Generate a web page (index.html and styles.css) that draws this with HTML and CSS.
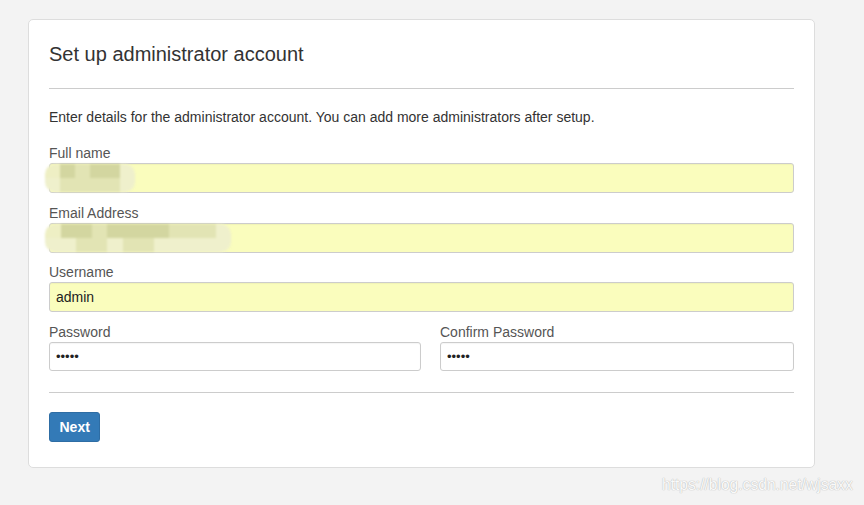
FILE: index.html
```html
<!DOCTYPE html>
<html>
  <head>
    <meta name="viewport" content="width=device-width, initial-scale=1" />
    <title>Set up administrator account</title>
    <link rel="stylesheet" href="styles.css">
  </head>
  <body>
    <div class="panel">
      <h2 class="panel-title">Set up administrator account</h2>
      <hr>
      <p class="intro">Enter details for the administrator account. You can add more administrators after setup.</p>
      <div class="field">
        <label>Full name</label>
        <div class="input-wrap">
          <input class="autofill" type="text" value="">
          <span class="mosaic mosaic-name">
            <i></i><i class="d"></i><i class="m"></i><i class="d"></i><i class="d"></i><i class="l"></i>
            <i class="l"></i><i class="m"></i><i class="m"></i><i class="m"></i><i class="m"></i><i class="l"></i>
          </span>
        </div>
      </div>
      <div class="field">
        <label>Email Address</label>
        <div class="input-wrap">
          <input class="autofill" type="text" value="">
          <span class="mosaic mosaic-email">
            <i></i><i class="d"></i><i class="d"></i><i class="m"></i><i class="d"></i><i class="d"></i><i class="d"></i><i class="d"></i><i class="m"></i><i class="m"></i><i class="m"></i><i class="l"></i>
            <i class="l"></i><i class="l"></i><i class="m"></i><i class="m"></i><i class="l"></i><i class="m"></i><i class="m"></i><i class="l"></i><i class="l"></i><i class="l"></i><i class="l"></i><i class="l"></i>
          </span>
        </div>
      </div>
      <div class="field">
        <label>Username</label>
        <input class="autofill" type="text" value="admin">
      </div>
      <div class="row">
        <div class="field">
          <label>Password</label>
          <input type="password" value="12345">
        </div>
        <div class="field">
          <label>Confirm Password</label>
          <input type="password" value="12345">
        </div>
      </div>
      <hr class="bottom-rule">
      <button class="btn-primary">Next</button>
    </div>
    <div class="watermark">https://blog.csdn.net/wjsaxx</div>
  </body>
</html>
```

FILE: styles.css
```css
body {
  margin: 0;
  padding: 19px 0 0 28px;
  background: #f3f3f3;
  font-family: "Liberation Sans", Arial, sans-serif;
  font-size: 14px;
  color: #333;
}

.panel {
  width: 745px;
  padding: 21px 20px 25px;
  background: #fff;
  border: 1px solid #ddd;
  border-radius: 5px;
}

.panel-title {
  margin: 0;
  font-size: 20px;
  font-weight: normal;
  line-height: 26px;
  color: #333;
}

hr {
  margin: 21px 0 0;
  border: 0;
  border-top: 1px solid #ccc;
}

.intro {
  margin: 18px 0 16px;
  line-height: 20px;
}

.field {
  margin-bottom: 9.5px;
}

.field label {
  display: block;
  line-height: 20px;
  color: #555;
}

.input-wrap {
  position: relative;
}

input {
  display: block;
  box-sizing: border-box;
  width: 100%;
  height: 30px;
  margin: 0;
  padding: 0 6px;
  font-family: "Liberation Sans", Arial, sans-serif;
  font-size: 14px;
  color: #222;
  background: #fff;
  border: 1px solid #ccc;
  border-radius: 3px;
  box-shadow: inset 0 1px 1px rgba(0, 0, 0, 0.04);
}

input[type="password"] {
  font-size: 13px;
}

input.autofill {
  background: #fafdbd;
}

.row {
  display: grid;
  grid-template-columns: 372px 1fr;
  gap: 19px;
}

.row .field {
  margin-bottom: 0;
}

.row input {
  height: 29.5px;
}

.bottom-rule {
  margin-top: 20.5px;
}

/* pixelated cover over the filled-in values */
.mosaic {
  position: absolute;
  top: 1px;
  left: -4px;
  display: grid;
  grid-auto-rows: 14px;
  filter: blur(1.2px);
  border-radius: 10px;
  overflow: hidden;
}
.mosaic-name {
  grid-template-columns: repeat(6, 15px);
}
.mosaic-email {
  grid-template-columns: repeat(12, 15.5px);
}
.mosaic i {
  background: #eeefc4;
}
.mosaic i.d {
  background: #d3d6a0;
}
.mosaic i.m {
  background: #e2e4b4;
}
.mosaic i.l {
  background: #eff0cc;
}

.btn-primary {
  display: block;
  margin-top: 19px;
  height: 30px;
  padding: 0 9.5px;
  font-family: "Liberation Sans", Arial, sans-serif;
  font-size: 14px;
  font-weight: bold;
  color: #fff;
  background: #337ab7;
  border: 1px solid #2e6da4;
  border-radius: 3px;
}

.watermark {
  position: absolute;
  top: 476px;
  left: 662px;
  font-size: 15.6px;
  color: #fafafa;
  text-shadow: 0 0 1px #bbb, 0 0 1px #bbb;
}
```
